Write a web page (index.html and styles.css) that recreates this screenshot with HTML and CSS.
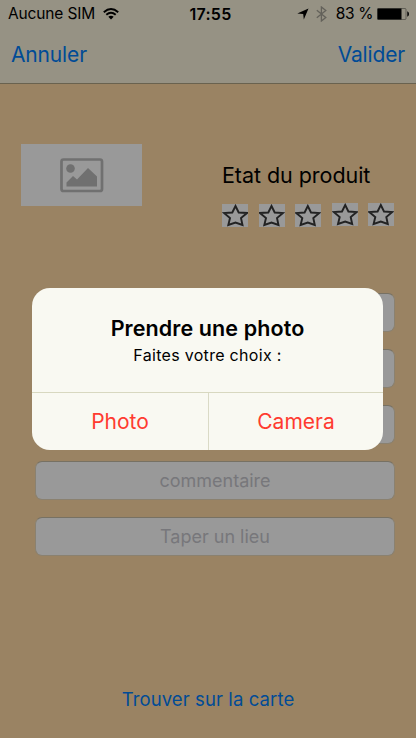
FILE: index.html
```html
<!DOCTYPE html>
<html lang="fr">
<head>
<meta charset="utf-8">
<title>Produit</title>
<link rel="stylesheet" href="styles.css">
</head>
<body>
<div class="screen">
  <header class="top">
    <div class="status">
      <div class="carrier">
        <span class="carrier-name">Aucune SIM</span>
        <svg class="wifi" width="16" height="12" viewBox="0 0 16 12"><g fill="none" stroke="#000" stroke-width="1.9"><path d="M.8 4.2Q8-2.2 15.200 4.200"/><path d="M3.300 6.800Q8 2.700 12.700 6.800"/></g><path d="M5.300 8.800Q8 6.600 10.700 8.800L8 11.600Z"/></svg>
      </div>
      <span class="time">17:55</span>
      <div class="indicators">
        <svg class="location" width="12" height="12" viewBox="0 0 12 12"><path d="M11.500.5L6.800 11.500 6.200 6.100.3 5.500Z"/></svg>
        <svg class="bluetooth" width="11" height="16" viewBox="0 0 11 16"><path d="M.8 4.200L9.800 11.500 5.400 15V1L9.800 4.500.8 11.800" fill="none" stroke="#63615a" stroke-width="1.300"/></svg>
        <span class="percent">83 %</span>
        <svg class="battery" width="33" height="12" viewBox="0 0 33 12"><rect x=".5" y=".5" width="28.500" height="11" rx="1" fill="none" stroke="#000" stroke-opacity=".7" stroke-width=".5"/><path d="M.5.5H24.500V11.500H.5ZM30.300 3.200Q32 4 32 6T30.300 8.800Z"/></svg>
      </div>
    </div>
    <nav class="nav"><span class="cancel">Annuler</span><span class="validate">Valider</span></nav>
  </header>
  <main class="content">
    <section class="product">
      <div class="picture">
        <svg width="44" height="35" viewBox="0 0 44 35"><rect x="1.500" y="1.500" width="40.500" height="31.500" rx="2" fill="none" stroke="#707070" stroke-width="2.700"/><circle cx="10.500" cy="10.500" r="4.300" fill="#707070"/><path d="M6.500 28.500V24.500L13 18 17 21.500 28 10 37 18.500V28.500Z" fill="#707070"/></svg>
      </div>
      <div class="rating">
        <div class="rating-title"><span class="state">Etat du produit</span></div>
        <div class="stars">
          <svg class="star" viewBox="0 0 26 23"><path d="M13.500 2L16.700 8.500 25 9 19 14 20.500 21 13.500 18.600 6.300 21 8 14 2 9 10.300 8.500Z"/></svg>
          <svg class="star" viewBox="0 0 26 23"><path d="M12.500 2L15.700 8.500 24 9 18 14 19.500 21 12.500 18.600 5.300 21 7 14 1 9 9.300 8.500Z"/></svg>
          <svg class="star" viewBox="0 0 26 23"><path d="M12.800 2L16 8.500 24.300 9 18.300 14 19.800 21 12.800 18.600 5.600 21 7.300 14 1.300 9 9.600 8.500Z"/></svg>
          <svg class="star raised" viewBox="0 0 26 23"><path d="M13.200 2L16.400 8.500 24.700 9 18.700 14 20.200 21 13.200 18.600 6 21 7.700 14 1.700 9 10 8.500Z"/></svg>
          <svg class="star raised" viewBox="0 0 26 23"><path d="M12.800 2L16 8.500 24.300 9 18.300 14 19.800 21 12.800 18.600 5.600 21 7.300 14 1.300 9 9.600 8.500Z"/></svg>
        </div>
      </div>
    </section>
    <form class="fields">
      <div class="field"></div>
      <div class="field"></div>
      <div class="field"></div>
      <div class="field"><span class="comment">commentaire</span></div>
      <div class="field"><span class="place">Taper un lieu</span></div>
    </form>
    <div class="map-link"><span class="map">Trouver sur la carte</span></div>
  </main>
  <div class="dialog" role="dialog">
    <div class="message">
      <div class="heading"><span>Prendre une photo</span></div>
      <div class="subtitle"><span>Faites votre choix :</span></div>
    </div>
    <div class="actions">
      <div class="action"><span class="photo">Photo</span></div>
      <div class="action"><span class="camera">Camera</span></div>
    </div>
  </div>
</div>
</body>
</html>
```
FILE: styles.css
```css
* { box-sizing: border-box; }
body { margin: 0; font-family: Inter, "Liberation Sans", sans-serif; color: #000; }
svg { display: block; flex: none; }
span { white-space: nowrap; }
.screen { position: relative; width: 416px; height: 738px; overflow: hidden; background: #9a8363; }
.top { height: 84px; background: #969284; border-bottom: 1px solid #69624f; }
.status { display: grid; grid-template-columns: 1fr auto 1fr; height: 28px; align-items: center; padding: 0 6px 0 8px; font-size: 15.500px; line-height: 28px; }
.carrier, .indicators { display: flex; align-items: center; }
.carrier { gap: 8px; }
.carrier-name { font-size: 15.500px; letter-spacing: -.15px; }
.time { padding-left: 3px; font-size: 16px; font-weight: 600; letter-spacing: .3px; }
.indicators { justify-content: flex-end; }
.bluetooth { margin-left: 7px; }
.percent { margin: 0 4px 0 9px; letter-spacing: -.4px; }
.nav { display: flex; justify-content: space-between; height: 55px; padding: 0 11px; font-size: 21px; letter-spacing: -.15px; line-height: 54px; color: #004b96; }
.content { padding: 60px 21px 0; }
.product { display: flex; justify-content: space-between; height: 149px; }
.picture { display: flex; align-items: center; justify-content: center; width: 121px; height: 62px; background: #999; }
.rating { width: 173px; padding-top: 15px; }
.rating-title { height: 45px; font-size: 21.500px; letter-spacing: -.05px; line-height: 32px; }
.stars { display: flex; justify-content: space-between; width: 172px; }
.star { width: 26px; height: 23px; background: #999; fill: none; stroke: #222; stroke-width: 1.900; }
.raised { margin-top: -1px; }
.fields { display: grid; gap: 17px; width: 360px; margin-left: 14px; }
.field { height: 39px; background: #999; border: 1px solid #8a8170; border-top-color: #777163; border-radius: 7px; text-align: center; font-size: 18px; line-height: 37px; color: #77777b; }
.map-link { margin-top: 129px; text-align: center; font-size: 18.500px; letter-spacing: .1px; line-height: 28px; color: #004b96; }
.dialog { position: absolute; left: 32px; top: 288px; width: 351px; height: 162px; border-radius: 18px; background: #f9f9f2; overflow: hidden; text-align: center; }
.message { height: 105px; padding-top: 25px; border-bottom: 1px solid #d8d8c0; }
.heading { font-size: 21.500px; font-weight: 600; letter-spacing: .1px; line-height: 30px; }
.subtitle { font-size: 16px; letter-spacing: .3px; line-height: 25px; }
.actions { display: grid; grid-template-columns: 177px 1fr; height: 57px; font-size: 21px; line-height: 57px; color: #ff3b30; }
.action:first-child { border-right: 1px solid #dadac6; }
```
